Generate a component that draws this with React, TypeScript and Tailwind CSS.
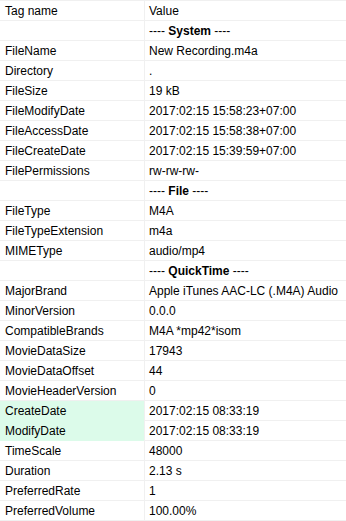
const rows: [string, string, boolean?][] = [
  ["", "System"],
  ["FileName", "New Recording.m4a"],
  ["Directory", "."],
  ["FileSize", "19 kB"],
  ["FileModifyDate", "2017:02:15 15:58:23+07:00"],
  ["FileAccessDate", "2017:02:15 15:58:38+07:00"],
  ["FileCreateDate", "2017:02:15 15:39:59+07:00"],
  ["FilePermissions", "rw-rw-rw-"],
  ["", "File"],
  ["FileType", "M4A"],
  ["FileTypeExtension", "m4a"],
  ["MIMEType", "audio/mp4"],
  ["", "QuickTime"],
  ["MajorBrand", "Apple iTunes AAC-LC (.M4A) Audio"],
  ["MinorVersion", "0.0.0"],
  ["CompatibleBrands", "M4A *mp42*isom"],
  ["MovieDataSize", "17943"],
  ["MovieDataOffset", "44"],
  ["MovieHeaderVersion", "0"],
  ["CreateDate", "2017:02:15 08:33:19", true],
  ["ModifyDate", "2017:02:15 08:33:19", true],
  ["TimeScale", "48000"],
  ["Duration", "2.13 s"],
  ["PreferredRate", "1"],
  ["PreferredVolume", "100.00%"],
];

export default function App() {
  return (
    <div
      className="w-[346px] bg-white border-t border-[#f0f0f0] text-[12px] leading-[19px] text-black"
      style={{ fontFamily: '"Liberation Sans", Arial, sans-serif' }}
    >
      <div className="grid grid-cols-[145px_1fr] h-[20px] border-b border-[#f0f0f0]">
        <div className="pl-[5px] pt-px border-r border-[#f0f0f0]">Tag name</div>
        <div className="pl-[4px] pt-px">Value</div>
      </div>
      {rows.map(([tag, value, hl], i) => (
        <div key={i} className="grid grid-cols-[145px_1fr] h-[20px] border-b border-[#f0f0f0]">
          <div className={`pl-[5px] pt-px border-r border-[#f0f0f0] ${hl ? "bg-[#dcfbea]" : ""}`}>{tag}</div>
          <div className="pl-[4px] pt-px whitespace-nowrap">
            {tag === "" ? (
              <>
                ---- <span className="font-bold">{value}</span> ----
              </>
            ) : (
              value
            )}
          </div>
        </div>
      ))}
    </div>
  );
}
